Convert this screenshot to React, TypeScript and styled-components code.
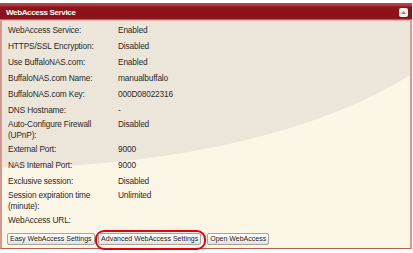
import React from "react";
import styled, { createGlobalStyle } from "styled-components";

const Global = createGlobalStyle`
  html, body { margin: 0; padding: 0; background: #ffffff; }
  body { font-family: "Liberation Sans", Arial, sans-serif; }
`;

const Page = styled.div`
  padding-top: 3px;
  width: 413px;
  height: 253px;
  box-sizing: border-box;
`;

const Panel = styled.section`
  width: 412px;
  box-sizing: border-box;
  display: flex;
  flex-direction: column;
`;

const Header = styled.header`
  height: 18px;
  box-sizing: border-box;
  display: flex;
  align-items: center;
  justify-content: space-between;
  padding: 1px 4px 0 6px;
  background: linear-gradient(
    to bottom,
    #b84a4e 0px,
    #a8343a 3px,
    #8e141b 4px,
    #8a1118 15px,
    #8f1b20 16px,
    #d8a6a0 17px,
    #e6c8c0 18px
  );
`;

const Title = styled.h2`
  margin: 0;
  font-size: 8px;
  font-weight: bold;
  color: #ffffff;
  letter-spacing: -0.35px;
`;

const Collapse = styled.button`
  width: 9px;
  height: 9px;
  padding: 0;
  border: none;
  border-radius: 2px;
  background: #f4f2f0;
  display: flex;
  align-items: center;
  justify-content: center;
`;

const Body = styled.div`
  border-left: 2px solid #d49890;
  border-right: 2px solid #d59c92;
  border-bottom: 1px solid #b5604f;
  background: radial-gradient(
      ellipse 490px 207px at 0px -60px,
      #ece5d9 99.6%,
      #fcf6e7 100%
    ),
    #fcf6e7;
  padding: 1px 0 3px 5px;
  display: flex;
  flex-direction: column;
`;

const Grid = styled.dl`
  margin: 0;
  display: grid;
  grid-template-columns: 111px 1fr;
  font-size: 8.3px;
  color: #2a2a2a;
  line-height: 11px;
  letter-spacing: -0.15px;
`;

const Label = styled.dt<{ $tall?: boolean }>`
  margin: 0;
  padding: ${(p) => (p.$tall ? "1px 0 0 1px" : "2.5px 0 2.5px 1px")};
`;

const Value = styled.dd<{ $tall?: boolean }>`
  margin: 0;
  padding: ${(p) => (p.$tall ? "1px 0 0 0" : "2.5px 0")};
`;

const Actions = styled.div`
  display: flex;
  align-items: center;
  margin-top: 5px;
`;

const Button = styled.button`
  height: 12px;
  box-sizing: border-box;
  padding: 0 2px;
  font-family: "Liberation Sans", Arial, sans-serif;
  font-size: 7px;
  line-height: 10px;
  color: #1c1c1c;
  border: 1px solid #a7a39c;
  border-radius: 2px;
  background: linear-gradient(to bottom, #ffffff 0%, #f4f3ef 60%, #e2dfd8 100%);
  white-space: nowrap;
`;

const Highlight = styled.span`
  display: inline-flex;
  padding: 1.5px 3px 2.5px 1.5px;
  border: 2.5px solid #e3000f;
  border-radius: 9px;
  margin: -4px 1px -5px 0;
`;

const rows: { label: React.ReactNode; value: string; tall?: boolean }[] = [
  { label: "WebAccess Service:", value: "Enabled" },
  { label: "HTTPS/SSL Encryption:", value: "Disabled" },
  { label: "Use BuffaloNAS.com:", value: "Enabled" },
  { label: "BuffaloNAS.com Name:", value: "manualbuffalo" },
  { label: "BuffaloNAS.com Key:", value: "000D08022316" },
  { label: "DNS Hostname:", value: "-" },
  {
    label: (
      <>
        Auto-Configure Firewall
        <br />
        (UPnP):
      </>
    ),
    value: "Disabled",
    tall: true,
  },
  { label: "External Port:", value: "9000" },
  { label: "NAS Internal Port:", value: "9000" },
  { label: "Exclusive session:", value: "Disabled" },
  {
    label: (
      <>
        Session expiration time
        <br />
        (minute):
      </>
    ),
    value: "Unlimited",
    tall: true,
  },
  { label: "WebAccess URL:", value: "" },
];

export default function App() {
  return (
    <Page>
      <Global />
      <Panel>
        <Header>
          <Title>WebAccess Service</Title>
          <Collapse aria-label="collapse">
            <svg width="7" height="7" viewBox="0 0 7 7">
              <path d="M1 5 L3.5 2 L6 5 Z" fill="#8a8a8a" />
            </svg>
          </Collapse>
        </Header>
        <Body>
          <Grid>
            {rows.map((r, i) => (
              <React.Fragment key={i}>
                <Label $tall={r.tall}>{r.label}</Label>
                <Value $tall={r.tall}>{r.value}</Value>
              </React.Fragment>
            ))}
          </Grid>
          <Actions>
            <Button>Easy WebAccess Settings</Button>
            <Highlight>
              <Button>Advanced WebAccess Settings</Button>
            </Highlight>
            <Button>Open WebAccess</Button>
          </Actions>
        </Body>
      </Panel>
    </Page>
  );
}
